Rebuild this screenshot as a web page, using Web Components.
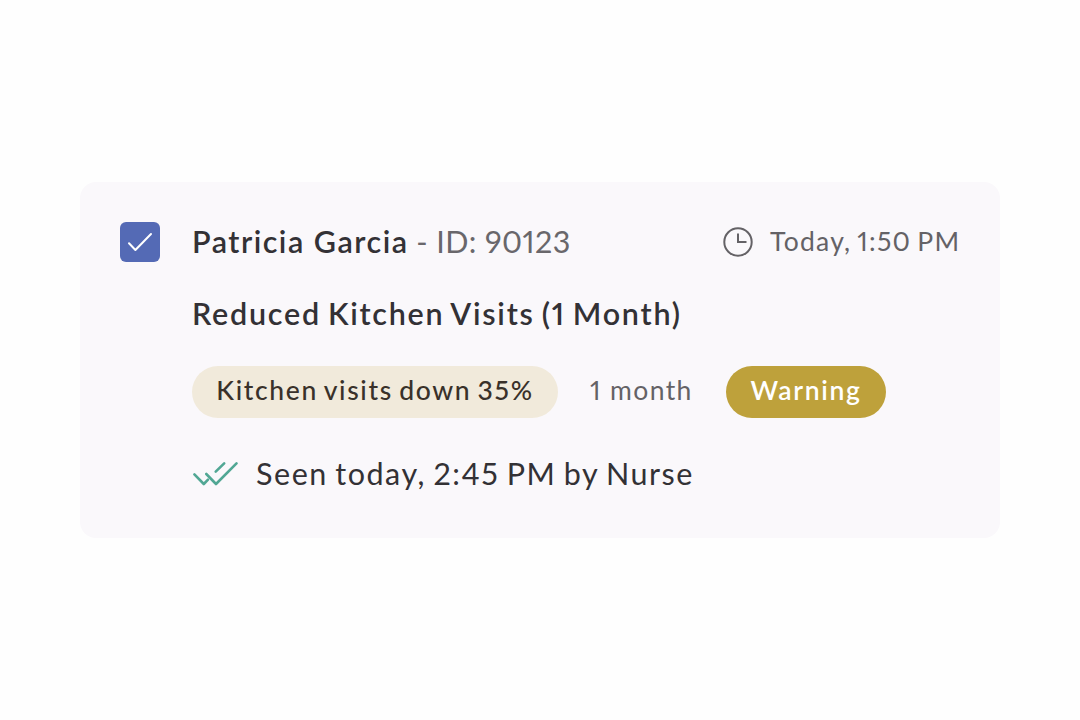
<!DOCTYPE html>
<html lang="en">
<head>
<meta charset="utf-8">
<title>Patient alert</title>
<style>
    body {
        margin: 0;
        min-height: 100vh;
        display: flex;
        align-items: center;
        justify-content: center;
        background: #fefefe;
        font-family: Lato, "Liberation Sans", sans-serif;
        font-variant-numeric: proportional-nums;
        color: #333135;
    }
</style>
</head>
<body>

<template id="alert-checkbox-template">
    <style>
        :host {
            display: flex;
            flex: none;
            align-items: center;
            justify-content: center;
            width: 40px;
            height: 40px;
            border-radius: 6px;
            background: #546ab5;
        }
        svg { display: block; }
    </style>
    <svg width="40" height="40" viewBox="0 0 40 40" fill="none" stroke="#fff" stroke-width="2" stroke-linecap="round" stroke-linejoin="round">
        <path d="M9 21.3 15.4 28 31 12"/>
    </svg>
</template>

<template id="alert-time-template">
    <style>
        :host {
            display: grid;
            grid-template-columns: 30px 190px;
            align-items: center;
            gap: 17px;
            color: #646266;
            font-size: 26.5px;
            line-height: 40px;
            letter-spacing: 1.25px;
            word-spacing: -2px;
            white-space: nowrap;
        }
        svg { display: block; }
        span { margin-top: -3px; }
    </style>
    <svg width="30" height="30" viewBox="0 0 30 30" fill="none" stroke="currentColor" stroke-width="2" stroke-linecap="round" stroke-linejoin="round">
        <circle cx="15" cy="15" r="13.7"/>
        <path d="M15 6.5V15H23.5" stroke-linecap="butt" stroke-linejoin="miter"/>
    </svg>
    <span><slot></slot></span>
</template>

<template id="alert-pill-template">
    <style>
        :host {
            display: flex;
            box-sizing: border-box;
            justify-content: center;
            height: 52px;
            border-radius: 26px;
            background: #f1eadb;
            color: #39312a;
            font-size: 26.5px;
            font-weight: 500;
            line-height: 49px;
            letter-spacing: 1.65px;
            word-spacing: -2px;
            white-space: nowrap;
        }
        :host([kind="metric"]) { width: 366px; }
        :host([kind="warning"]) {
            width: 160px;
            background: #bea13b;
            color: #fff;
            font-weight: 600;
        }
    </style>
    <slot></slot>
</template>

<template id="alert-seen-template">
    <style>
        :host {
            display: flex;
            align-items: center;
            gap: 18px;
            height: 48px;
            font-size: 30.5px;
            letter-spacing: 1.55px;
            word-spacing: -2px;
            white-space: nowrap;
        }
        svg { display: block; flex: none; }
        span { margin-top: -3px; }
    </style>
    <svg width="46" height="30" viewBox="0 0 46 30" fill="none" stroke="#51a794" stroke-width="2.6" stroke-linecap="round" stroke-linejoin="round">
        <path d="M2.4 15.4 11.8 25 16 20.6"/>
        <path d="M23.7 12.7 32.2 4.3"/>
        <path d="M14.3 15 24 25 44.5 4.3"/>
    </svg>
    <span><slot></slot></span>
</template>

<template id="patient-alert-template">
    <style>
        :host {
            display: flex;
            box-sizing: border-box;
            align-items: flex-start;
            gap: 32px;
            width: 920px;
            height: 356px;
            padding: 40px;
            border-radius: 16px;
            background: #faf8fb;
        }
        .body {
            display: flex;
            flex: 1;
            flex-direction: column;
            gap: 32px;
        }
        .head {
            display: flex;
            justify-content: space-between;
            height: 40px;
        }
        .patient, .title {
            height: 40px;
            font-size: 30.5px;
            line-height: 38px;
            white-space: nowrap;
        }
        .name, .title { font-weight: 600; }
        .name { letter-spacing: 1.5px; }
        .title {
            letter-spacing: 1.75px;
            word-spacing: -2.3px;
        }
        .id {
            color: #69676b;
            letter-spacing: 0.4px;
        }
        .details {
            display: flex;
            height: 52px;
        }
        .period {
            width: 104px;
            margin: 0 32px;
            color: #646266;
            font-size: 26.5px;
            line-height: 49px;
            letter-spacing: 1.4px;
            white-space: nowrap;
        }
    </style>
    <alert-checkbox></alert-checkbox>
    <div class="body">
        <div class="head">
            <div class="patient"><span class="name"><slot name="name"></slot></span> <span class="id">- <slot name="id"></slot></span></div>
            <alert-time><slot name="time"></slot></alert-time>
        </div>
        <div class="title"><slot name="title"></slot></div>
        <div class="details">
            <alert-pill kind="metric"><slot name="metric"></slot></alert-pill>
            <div class="period"><slot name="period"></slot></div>
            <alert-pill kind="warning"><slot name="level"></slot></alert-pill>
        </div>
        <alert-seen><slot name="seen"></slot></alert-seen>
    </div>
</template>

<patient-alert>
    <span slot="name">Patricia Garcia</span>
    <span slot="id">ID: 90123</span>
    <span slot="time">Today, 1:50 PM</span>
    <span slot="title">Reduced Kitchen Visits (1 Month)</span>
    <span slot="metric">Kitchen visits down 35%</span>
    <span slot="period">1 month</span>
    <span slot="level">Warning</span>
    <span slot="seen">Seen today, 2:45 PM by Nurse</span>
</patient-alert>

<script>
    class TemplateElement extends HTMLElement {

        constructor() {
            super();

            let template = document.querySelector("#" + this.localName + "-template");
            this.shadow = this.attachShadow({mode: "open"});
            this.shadow.appendChild(template.content.cloneNode(true));
        }

    }

    class AlertCheckbox extends TemplateElement {}
    class AlertTime extends TemplateElement {}
    class AlertPill extends TemplateElement {}
    class AlertSeen extends TemplateElement {}
    class PatientAlert extends TemplateElement {}

    customElements.define("alert-checkbox", AlertCheckbox);
    customElements.define("alert-time", AlertTime);
    customElements.define("alert-pill", AlertPill);
    customElements.define("alert-seen", AlertSeen);
    customElements.define("patient-alert", PatientAlert);
</script>
</body>
</html>
